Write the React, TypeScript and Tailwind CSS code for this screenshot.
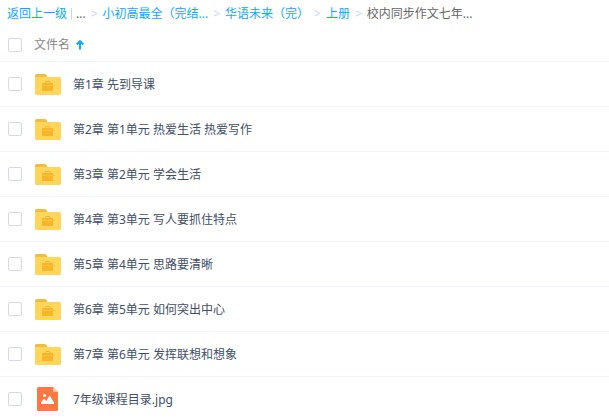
const files = [
  { name: '第1章 先到导课', kind: 'folder' },
  { name: '第2章 第1单元 热爱生活 热爱写作', kind: 'folder' },
  { name: '第3章 第2单元 学会生活', kind: 'folder' },
  { name: '第4章 第3单元 写人要抓住特点', kind: 'folder' },
  { name: '第5章 第4单元 思路要清晰', kind: 'folder' },
  { name: '第6章 第5单元 如何突出中心', kind: 'folder' },
  { name: '第7章 第6单元 发挥联想和想象', kind: 'folder' },
  { name: '7年级课程目录.jpg', kind: 'image' },
];

const crumbs = ['小初高最全（完结...', '华语未来（完）', '上册'];

function FolderIcon() {
  return (
    <svg width="26" height="21" viewBox="0 0 26 21" aria-hidden="true">
      <path d="M0 5V1.5Q0 0 1.5 0H10Q11 0 11.5 1L13 4V8H0Z" fill="#edbd45" />
      <path d="M0 3H24.5Q26 3 26 4.500V19.500Q26 21 24.500 21H1.500Q0 21 0 19.500Z" fill="#ffd659" />
      <path d="M10.500 9V8.200Q10.500 7.500 11.200 7.500H14.300Q15 7.500 15 8.200V9" fill="none" stroke="#f7b52c" />
      <path d="M7 9.500Q7 9 7.500 9H17.500Q18 9 18 9.500V11.500H7Z" fill="#f7b52c" />
      <path d="M7 12H18V16.500Q18 17 17.500 17H7.500Q7 17 7 16.500Z" fill="#f7b52c" />
      <path d="M7 11H20V12H7Z" fill="#fac23c" />
    </svg>
  );
}

function ImageIcon() {
  return (
    <svg width="21" height="24" viewBox="0 0 21 24" className="ml-0.5" aria-hidden="true">
      <path d="M1.500 0H16L21 5V22.500Q21 24 19.500 24H1.500Q0 24 0 22.500V1.500Q0 0 1.500 0Z" fill="#ff7844" />
      <path d="M16 0L21 5H17.200Q16 5 16 3.800Z" fill="#ffc9b4" />
      <circle cx="7.500" cy="8.500" r="1.500" fill="#fff" />
      <path d="M4 17V15.500L7 11.700L9.300 14L12.700 8.500L17 15.500V17Z" fill="#fff" />
    </svg>
  );
}

function CheckBox({ id, label }: { id: string; label?: string }) {
  return (
    <input
      id={id}
      type="checkbox"
      aria-label={label}
      className="size-3.5 shrink-0 appearance-none rounded-xs border border-[#d5dae2] bg-white checked:bg-[#06a7ff]"
    />
  );
}

export default function App() {
  return (
    <main className="w-full overflow-hidden bg-white font-['Noto_Sans','Noto_Sans_CJK_SC',sans-serif] text-xs text-[#424e67]">
      <nav aria-label="路径" className="flex h-7 items-center gap-[5px] whitespace-nowrap pl-[7px] text-[#09aaff]">
        <span className="flex items-center gap-1">
          <a href="#up">返回上一级</a>
          <span className="h-3 w-px bg-[#c4d8f4]" />
          <span className="text-[#666]">...</span>
        </span>
        {crumbs.map((crumb) => (
          <span key={crumb} className="flex gap-[5px]">
            <span className="text-[#c4d8f4]">&gt;</span>
            <a href="#folder">{crumb}</a>
          </span>
        ))}
        <span className="flex gap-[5px]">
          <span className="text-[#c4d8f4]">&gt;</span>
          <span className="text-[#666]">校内同步作文七年...</span>
        </span>
      </nav>
      <header className="flex h-[34px] items-center border-b border-[#f0f4fc] pl-2">
        <CheckBox id="all" label="全选" />
        <button type="button" className="ml-3 flex items-center gap-1.5 text-[#888]">
          文件名
          <svg width="8" height="10" viewBox="0 0 8 10" aria-hidden="true">
            <path d="M4 9.500V1.500M0.700 4.500L4 1.200L7.300 4.500" fill="none" stroke="#09aaff" strokeWidth="2" />
          </svg>
        </button>
      </header>
      <ul>
        {files.map((file, i) => (
          <li key={file.name} className="flex h-[45px] items-center border-b border-[#f0f4fc] pl-2">
            <CheckBox id={`file-${i}`} />
            <label htmlFor={`file-${i}`} className="flex items-center">
              <span className="ml-[13px] w-[38px]">{file.kind === 'folder' ? <FolderIcon /> : <ImageIcon />}</span>
              <span className="pt-0.5">{file.name}</span>
            </label>
          </li>
        ))}
      </ul>
    </main>
  );
}
